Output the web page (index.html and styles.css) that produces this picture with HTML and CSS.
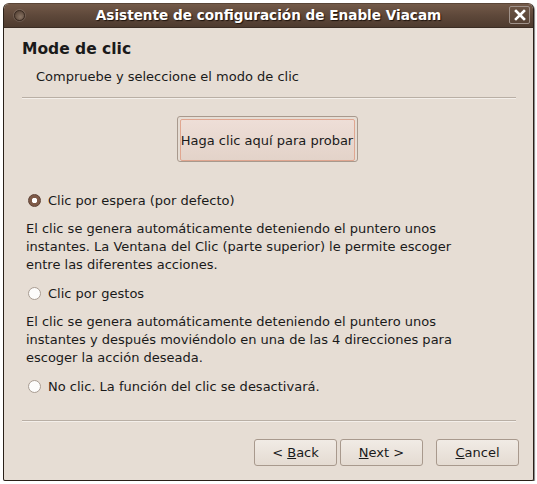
FILE: index.html
```html
<!DOCTYPE html>
<html>
<head>
<meta charset="utf-8">
<link rel="stylesheet" href="styles.css">
</head>
<body>
<div class="window">
  <div class="titlebar">
    <span class="menu-dot"></span>
    <span class="title">Asistente de configuración de Enable Viacam</span>
    <span class="close"><svg width="12" height="12" viewBox="0 0 12 12"><path d="M2 2 L10 10 M10 2 L2 10" stroke="#fff" stroke-width="2.6" stroke-linecap="square"/></svg></span>
  </div>
  <div class="content">
    <div class="header">
      <div class="heading">Mode de clic</div>
      <div class="subheading">Compruebe y seleccione el modo de clic</div>
    </div>
    <div class="sep"></div>
    <div class="test-row"><button class="test-btn"><span>Haga clic aquí para probar</span></button></div>
    <label class="radio first"><span class="dot checked"></span>Clic por espera (por defecto)</label>
    <p class="desc">El clic se genera automáticamente deteniendo el puntero unos instantes. La Ventana del Clic (parte superior) le permite escoger entre las diferentes acciones.</p>
    <label class="radio"><span class="dot"></span>Clic por gestos</label>
    <p class="desc">El clic se genera automáticamente deteniendo el puntero unos instantes y después moviéndolo en una de las 4 direcciones para escoger la acción deseada.</p>
    <label class="radio"><span class="dot"></span>No clic. La función del clic se desactivará.</label>
    <div class="spacer"></div>
    <div class="sep bottom"></div>
    <div class="actions">
      <button class="btn">&lt; <u>B</u>ack</button>
      <button class="btn"><u>N</u>ext &gt;</button>
      <button class="btn cancel"><u>C</u>ancel</button>
    </div>
  </div>
</div>
</body>
</html>
```
FILE: styles.css
```css
html, body { margin: 0; padding: 0; background: #fff; }
body { font-family: "DejaVu Sans", sans-serif; font-size: 13px; color: #1a1a1a; }
.window {
  margin: 3px 3px 0 3px;
  width: 529px;
  height: 476px;
  border: 1px solid #2a2018;
  border-top-color: #5a4638;
  border-radius: 6px 6px 2px 2px;
  background: #e6ddd4;
  display: flex;
  flex-direction: column;
  overflow: hidden;
  box-shadow: 1px 1px 1px rgba(0,0,0,0.5);
}
.titlebar {
  height: 23px;
  flex: none;
  background: linear-gradient(#735a49, #5e483a 50%, #4e3b2f);
  display: flex;
  align-items: center;
  position: relative;
  border-bottom: 1px solid #3b2d24;
}
.menu-dot {
  width: 9px; height: 9px;
  border-radius: 50%;
  margin-left: 10px;
  background: radial-gradient(circle at 60% 65%, #8a7565, #4b382c);
  border: 1px solid #3a2b22;
  box-shadow: 0 0 0 1px rgba(255,255,255,0.12);
}
.title {
  position: absolute; left: 0; right: 0; text-align: center;
  color: #fff; font-weight: bold; font-size: 13.6px;
  text-shadow: 1px 1px 1px #1e140e;
  top: 3px;
}
.close {
  position: absolute; right: 3px; top: 2px;
  width: 19px; height: 16px;
  border: 1px solid #a0928a;
  border-radius: 2px;
  background: linear-gradient(#6b5444, #574336);
  display: flex; align-items: center; justify-content: center;
}
.content {
  flex: 1;
  display: flex;
  flex-direction: column;
  padding: 0 17px 0 18px;
}
.header { padding: 12px 0 0 0; }
.heading { font-weight: bold; font-size: 15.5px; height: 22px; }
.subheading { padding-left: 14px; margin-top: 7px; height: 18px; }
.sep {
  height: 1px; background: #b9afa5;
  border-bottom: 1px solid #f4efea;
  margin-top: 10px;
}
.test-row { display: flex; justify-content: center; margin-top: 17px; padding-right: 4px; }
.test-btn {
  font: inherit; color: #1a1a1a;
  width: 181px; height: 46px;
  padding: 2px;
  border: 1px solid #a8998d;
  border-radius: 3px;
  background: #e6ddd4;
  margin: 0;
  white-space: nowrap;
}
.test-btn span {
  display: flex; align-items: center; justify-content: center;
  height: 100%;
  padding: 0;
  white-space: nowrap;
  border: 1px solid #e0a690;
  border-radius: 2px;
  background: linear-gradient(#eeded7, #e3d3c9);
}
.radio {
  display: flex; align-items: center;
  margin-left: 6px;
  height: 18px;
}
.radio.first { margin-top: 29px; }
.dot {
  width: 11px; height: 11px; border-radius: 50%;
  border: 1px solid #a89c92;
  background: #fdfcfb;
  margin-right: 7px;
  box-sizing: content-box;
}
.dot.checked {
  background: radial-gradient(circle, #ffffff 0 2.5px, #7e5a48 3px);
  border-color: #5e4134;
}
.desc { margin: 11px 0 10px 4px; line-height: 18px; max-width: 456px; }
.spacer { flex: 1; }
.sep.bottom { margin: 0; }
.actions {
  display: flex; justify-content: flex-end;
  gap: 3px;
  margin-right: -3px;
  padding: 17px 0 14px 0;
}
.btn {
  font: inherit; color: #1a1a1a;
  width: 83px; height: 27px;
  border: 1px solid #a8998d;
  border-radius: 3px;
  background: linear-gradient(#f1ebe5, #e4dbd2);
  margin: 0;
  padding: 0;
}
.btn.cancel { margin-left: 10px; }
```
